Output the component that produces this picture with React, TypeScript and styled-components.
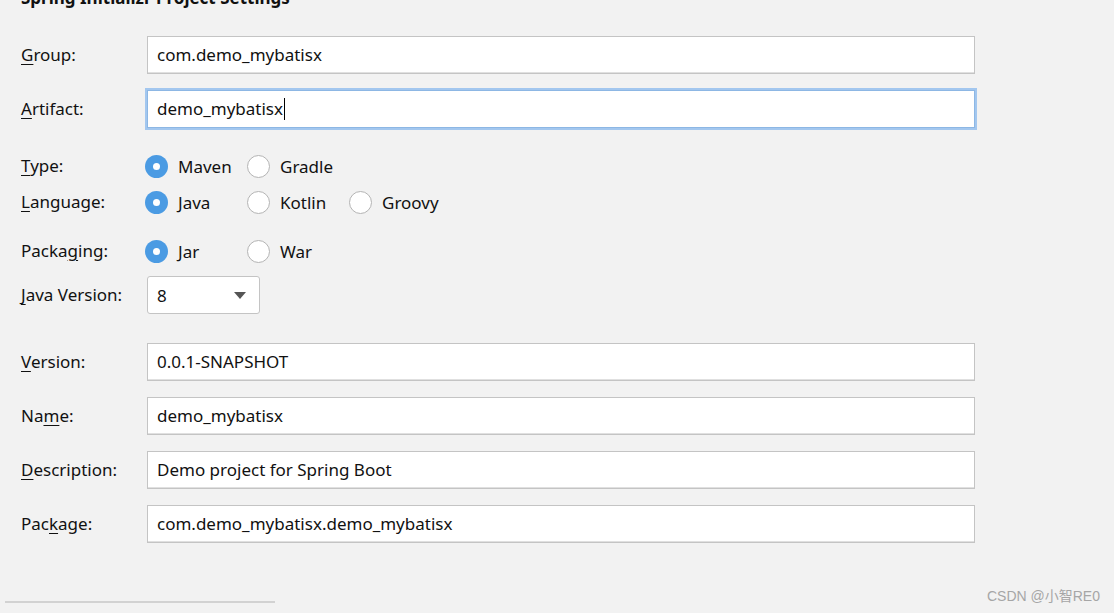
import styled, { createGlobalStyle } from 'styled-components';

interface RadioProps {
  $checked: boolean;
}

interface InputProps {
  $focused?: boolean;
}

interface RowProps {
  $top: number;
}

const GlobalStyle = createGlobalStyle`
  html, body {
    margin: 0;
    padding: 0;
    background: #f2f2f2;
  }
  body {
    font-family: 'Noto Sans', 'Liberation Sans', sans-serif;
    color: #000;
  }
`;

const radioGroups = [
  { label: 'Type', key: 'T', options: ['Maven', 'Gradle'], top: 20 },
  { label: 'Language', key: 'L', options: ['Java', 'Kotlin', 'Groovy'], top: 0 }
];

const lowerFields = [
  { label: 'Version', key: 'V', value: '0.0.1-SNAPSHOT' },
  { label: 'Name', key: 'm', value: 'demo_mybatisx' },
  { label: 'Description', key: 'D', value: 'Demo project for Spring Boot' },
  { label: 'Package', key: 'k', value: 'com.demo_mybatisx.demo_mybatisx' }
];

// underline the mnemonic letter, like a swing label
function Mnemonic({ text, letter }: { text: string; letter: string }) {
  const i = text.indexOf(letter);
  if (i < 0) return <>{text}:</>;
  return (
    <>
      {text.slice(0, i)}
      <u>{text[i]}</u>
      {text.slice(i + 1)}:
    </>
  );
}

export default function App() {
  return (
    <Page>
      <GlobalStyle />
      <Form>
        <Title>Spring Initializr Project Settings</Title>

        <FieldRow $top={27}>
          <Label>
            <Mnemonic text="Group" letter="G" />
          </Label>
          <TextBox>com.demo_mybatisx</TextBox>
        </FieldRow>
        <FieldRow $top={16}>
          <Label>
            <Mnemonic text="Artifact" letter="A" />
          </Label>
          <TextBox $focused>
            demo_mybatisx
            <Caret />
          </TextBox>
        </FieldRow>

        {radioGroups.map((g) => (
          <RadioRow key={g.label} $top={g.top}>
            <Label>
              <Mnemonic text={g.label} letter={g.key} />
            </Label>
            <Options>
              {g.options.map((o, i) => (
                <Option key={o}>
                  <Radio $checked={i === 0} />
                  {o}
                </Option>
              ))}
            </Options>
          </RadioRow>
        ))}

        <RadioRow $top={13}>
          <Label>
            Packa<u>g</u>ing:
          </Label>
          <Options>
            <Option>
              <Radio $checked />
              Jar
            </Option>
            <Option>
              <Radio $checked={false} />
              War
            </Option>
          </Options>
        </RadioRow>

        <FieldRow $top={7}>
          <Label>
            <Mnemonic text="Java Version" letter="J" />
          </Label>
          <Select>
            8
            <Arrow />
          </Select>
        </FieldRow>

        <LowerBlock>
          {lowerFields.map((f) => (
            <FieldRow key={f.label} $top={0}>
              <Label>
                <Mnemonic text={f.label} letter={f.key} />
              </Label>
              <TextBox>{f.value}</TextBox>
            </FieldRow>
          ))}
        </LowerBlock>
      </Form>
      <Divider />
      <Watermark>CSDN @小智RE0</Watermark>
    </Page>
  );
}

const Page = styled.div`
  position: relative;
  width: 1114px;
  height: 613px;
  overflow: hidden;
  padding: 0 5px;
  box-sizing: border-box;
`;

const Form = styled.div`
  padding-left: 16px;
  display: flex;
  flex-direction: column;
`;

const Title = styled.div`
  margin-top: -13px;
  height: 22px;
  font-size: 17px;
  font-weight: 700;
  line-height: 22px;
  color: #111;
  white-space: nowrap;
`;

const FieldRow = styled.div<RowProps>`
  display: flex;
  align-items: center;
  margin-top: ${(p) => p.$top}px;
`;

const RadioRow = styled.div<RowProps>`
  display: flex;
  align-items: center;
  height: 36px;
  margin-top: ${(p) => p.$top}px;
`;

const Label = styled.div`
  width: 126px;
  flex-shrink: 0;
  font-size: 17px;
  line-height: 22px;
  color: #111;

  u {
    text-decoration-thickness: 1px;
    text-underline-offset: 3px;
  }
`;

const TextBox = styled.div<InputProps>`
  width: 828px;
  height: 38px;
  box-sizing: border-box;
  display: flex;
  align-items: center;
  padding-left: 9px;
  background: #ffffff;
  border: 1px solid ${(p) => (p.$focused ? '#8db7e4' : '#c4c4c4')};
  box-shadow: ${(p) =>
    p.$focused ? '0 0 0 2px #a3c7ef' : 'inset 0 -1px 0 #e0e0e0'};
  font-size: 17px;
  line-height: 22px;
  color: #111;
  white-space: pre;
`;

const Caret = styled.span`
  display: inline-block;
  width: 1px;
  height: 22px;
  background: #000;
  margin-left: 1px;
`;

const Options = styled.div`
  display: flex;
  align-items: center;
  margin-left: -2px;
`;

const Option = styled.label`
  display: flex;
  align-items: center;
  gap: 10px;
  width: 102px;
  font-size: 17px;
  color: #111;
`;

const Radio = styled.span<RadioProps>`
  width: 23px;
  height: 23px;
  box-sizing: border-box;
  border-radius: 50%;
  flex-shrink: 0;
  position: relative;
  background: ${(p) => (p.$checked ? '#4b9be3' : '#ffffff')};
  border: ${(p) => (p.$checked ? 'none' : '1.5px solid #b4b4b4')};

  &::after {
    content: '';
    display: ${(p) => (p.$checked ? 'block' : 'none')};
    position: absolute;
    left: 50%;
    top: 50%;
    width: 7px;
    height: 7px;
    margin: -3.5px 0 0 -3.5px;
    border-radius: 50%;
    background: #ffffff;
  }
`;

const Select = styled.div`
  width: 113px;
  height: 38px;
  box-sizing: border-box;
  display: flex;
  align-items: center;
  justify-content: space-between;
  padding: 0 13px 0 9px;
  background: #ffffff;
  border: 1px solid #c4c4c4;
  border-radius: 3px;
  font-size: 17px;
  color: #111;
`;

const Arrow = styled.span`
  width: 0;
  height: 0;
  border-left: 6px solid transparent;
  border-right: 6px solid transparent;
  border-top: 7px solid #555;
`;

const LowerBlock = styled.div`
  margin-top: 29px;
  display: flex;
  flex-direction: column;
  gap: 16px;
`;

const Divider = styled.div`
  position: absolute;
  left: 5px;
  top: 601px;
  width: 270px;
  height: 2px;
  background: #d2d2d2;
`;

const Watermark = styled.div`
  position: absolute;
  right: 14px;
  bottom: 8px;
  font-family: 'Liberation Sans', 'Noto Sans CJK SC', sans-serif;
  font-size: 14px;
  color: #a6a6a6;
`;
